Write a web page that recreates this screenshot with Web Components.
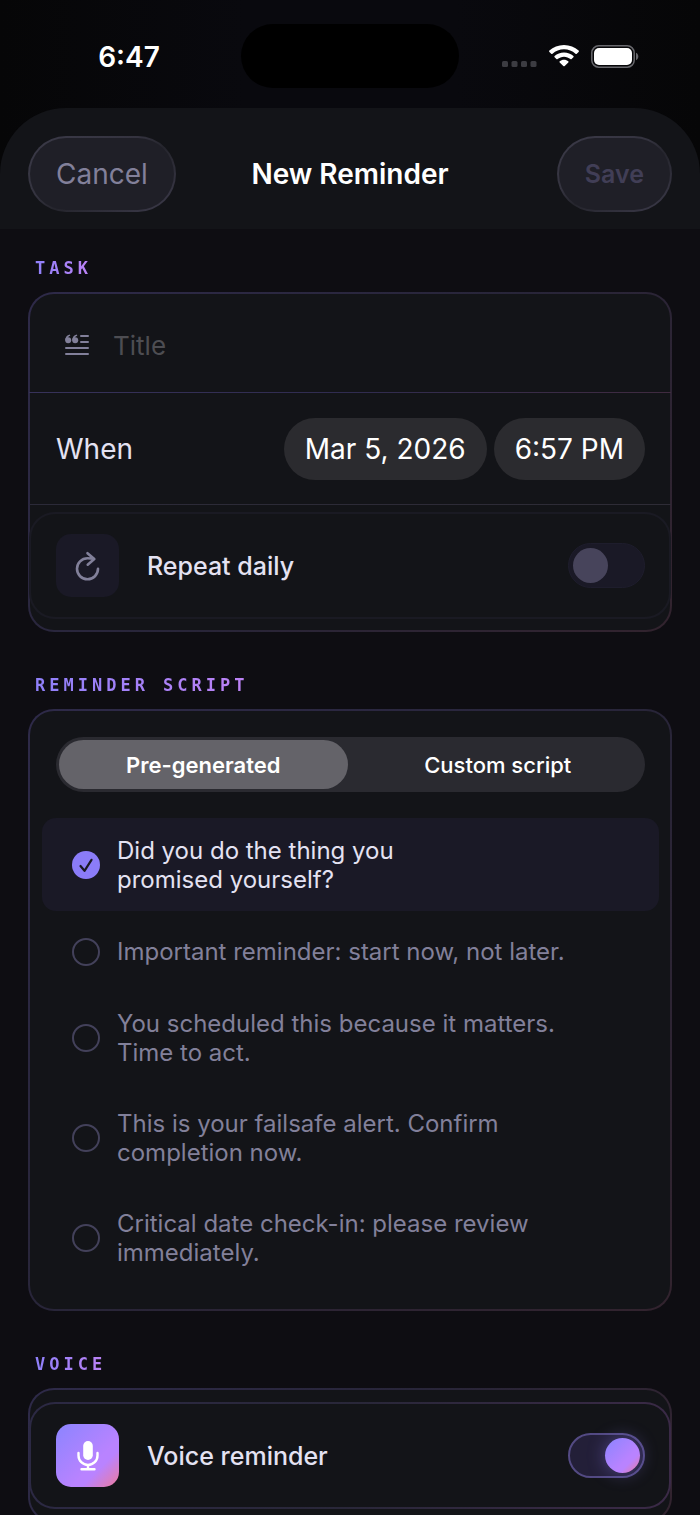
<!DOCTYPE html>
<html lang="en">
<head>
<meta charset="utf-8">
<meta name="viewport" content="width=device-width, initial-scale=1">
<title>New Reminder</title>
<style>
  html { height: 100%; background: #060609; }
  body {
    margin: 0;
    height: 100%;
    font-family: Inter, "Liberation Sans", sans-serif;
    color: #e4e2f2;
    --surface: #131418;
    --ground: #0e0d12;
    --raised: #1a1926;
    --muted: #82809a;
    --violet: #8b7cf8;
    --accent: linear-gradient(135deg, #8b84ff 0%, #b983ff 62%, #b983ff 70%, #ee7a9c 100%);
  }
</style>
</head>
<body>
<reminder-app></reminder-app>

<script>
const define = (name, html, setup) => {
  const template = document.createElement('template');
  template.innerHTML = html;
  customElements.define(name, class extends HTMLElement {
    constructor() {
      super();
      this.attachShadow({ mode: 'open' }).append(template.content.cloneNode(true));
    }
    connectedCallback() { if (setup) setup(this, this.shadowRoot); }
  });
};

/* Clock, camera island and signal / wifi / battery glyphs */
define('status-bar', `
<style>
  :host { display: grid; grid-template-columns: 1fr 218px 1fr; align-items: center; height: 64px; padding: 24px 0 20px; }
  .time { justify-self: center; font-size: 28px; line-height: 34px; font-weight: 600; color: #fff; padding: 2px 0 0 17px; }
  .island { height: 64px; border-radius: 32px; background: #000; }
  .glyphs { display: flex; align-items: center; gap: 12px; justify-self: end; padding-right: 61px; }
  .dots { margin-top: 15px; }
  svg { display: block; }
</style>
<span class="time">6:47</span>
<span class="island"></span>
<span class="glyphs">
  <svg class="dots" width="35" height="6" viewBox="0 0 35 6" fill="#3c3c42"><rect width="6" height="6" rx="1.500"/><rect x="9.500" width="6" height="6" rx="1.500"/><rect x="19" width="6" height="6" rx="1.500"/><rect x="28.500" width="6" height="6" rx="1.500"/></svg>
  <svg width="30" height="22" viewBox="0 0 30 22" fill="#fff"><path d="M15 0C9.300 0 4.200 2.100.400 5.600a.9.900 0 0 0 0 1.300l1.800 1.800c.4.4.9.4 1.300 0C6.600 5.900 10.600 4.300 15 4.300s8.400 1.600 11.500 4.400c.4.4.9.4 1.300 0l1.800-1.800a.9.900 0 0 0 0-1.300C25.800 2.100 20.700 0 15 0z"/><path d="M15 7.400c-3.600 0-6.900 1.300-9.400 3.500a.9.900 0 0 0 0 1.300l1.800 1.800c.4.4.9.4 1.200.1 1.700-1.500 4-2.400 6.400-2.400s4.700.9 6.400 2.400c.3.3.9.3 1.200-.1l1.800-1.800a.9.900 0 0 0 0-1.300c-2.500-2.200-5.800-3.500-9.400-3.500z"/><path d="M15 14.700c-1.700 0-3.200.6-4.300 1.500-.4.4-.4.9 0 1.200l3.600 3.600c.4.4 1 .4 1.400 0l3.600-3.600c.4-.3.4-.8 0-1.200-1.100-.9-2.600-1.500-4.300-1.500z"/></svg>
  <svg width="48" height="23" viewBox="0 0 48 23"><rect x=".8" y=".8" width="42.400" height="21.400" rx="7" fill="none" stroke="#68686d" stroke-width="1.500"/><rect x="3" y="3" width="38" height="17" rx="5" fill="#fff"/><path d="M45 7.800c1.400.6 2.300 2 2.300 3.700s-.9 3.100-2.300 3.700z" fill="#68686d"/></svg>
</span>`);

define('pill-button', `
<style>
  :host { display: block; }
  button {
    display: block; box-sizing: border-box; height: 76px; padding: 0 26px;
    border: 2px solid transparent; border-radius: 38px;
    background: linear-gradient(#1f1f27, #1f1f27) padding-box,
      linear-gradient(150deg, #3b3a48, #34333f 40%, #25252d 55%, #3d3b4b) border-box;
    font: inherit; font-size: 28px; line-height: 34px; color: var(--muted);
  }
  :host([strong]) button { font-size: 25px; font-weight: 600; }
  button:disabled { color: #413e56; }
</style>
<button type="button"><slot></slot></button>`, (host, root) => {
  root.querySelector('button').disabled = host.hasAttribute('disabled');
});

define('sheet-header', `
<style>
  :host { display: grid; grid-template-columns: 1fr auto 1fr; align-items: center; box-sizing: border-box; height: 121px; padding: 10px 28px 0; background: var(--surface); border-radius: 66px 66px 0 0; }
  h1 { margin: 0; font-size: 28px; line-height: 34px; font-weight: 600; color: #fff; white-space: nowrap; }
  ::slotted([slot=start]) { justify-self: start; }
  ::slotted([slot=end]) { justify-self: end; }
</style>
<slot name="start"></slot><h1><slot></slot></h1><slot name="end"></slot>`);

/* Tracked gradient heading above a bordered card */
define('form-section', `
<style>
  :host { display: block; }
  h2 {
    width: fit-content; margin: 0 7px 14px; font-family: "DejaVu Sans Mono", monospace; font-size: 17px; line-height: 20px;
    font-weight: 700; letter-spacing: 4px; color: transparent;
    background: linear-gradient(90deg, #8f80fa, #bd82f5); background-clip: text; -webkit-background-clip: text;
  }
  .card {
    border: 2px solid transparent; border-radius: 26px;
    background: linear-gradient(var(--surface), var(--surface)) padding-box,
      linear-gradient(135deg, #2e2a49, #282539 50%, #32232e) border-box;
  }
</style>
<h2></h2>
<div class="card"><slot></slot></div>`, (host, root) => {
  root.querySelector('h2').textContent = host.getAttribute('heading');
});

define('title-field', `
<style>
  :host { display: flex; align-items: center; gap: 24px; height: 98px; padding: 4px 35px 0; box-sizing: border-box; }
  svg { flex: none; }
  input { flex: 1; min-width: 0; height: 48px; padding: 0; border: 0; outline: 0; background: none; font: inherit; font-size: 26px; color: inherit; }
  input::placeholder { color: #4d4d52; opacity: 1; }
</style>
<svg width="24" height="22" viewBox="0 0 24 22" fill="none" stroke="#82809a" stroke-width="2" stroke-linecap="round"><path d="M16 2h7M16 8h7M1 14h22M1 20h22"/><g fill="#82809a" stroke="none"><circle cx="3.200" cy="6.200" r="3"/><path d="M.2 6.200C.2 3.200 1.800 1.200 4.800.5l.5 1.200C3.500 2.300 2.500 3.500 2.400 5z"/><circle cx="10.200" cy="6.200" r="3"/><path d="M7.200 6.200c0-3 1.600-5 4.600-5.700l.5 1.200C10.500 2.300 9.500 3.500 9.400 5z"/></g></svg>
<input type="text" placeholder="Title" aria-label="Title">`);

define('when-field', `
<style>
  :host { display: flex; align-items: center; gap: 7px; box-sizing: border-box; height: 113px; padding: 0 26px 0 27px; border: solid transparent; border-width: 1px 0;
    background: linear-gradient(90deg, #37325a, #302c50 50%, #402b40) top / 100% 1px no-repeat border-box,
      linear-gradient(90deg, #2b2a38, #2e2c36) bottom / 100% 1px no-repeat border-box; }
  span { flex: 1; font-size: 28px; line-height: 34px; }
  button { height: 62px; padding: 0 21px; border: 0; border-radius: 31px; background: #2b2b2f; color: #fff; font: inherit; font-size: 28px; line-height: 34px; white-space: nowrap; }
</style>
<span id="when">When</span>
<button type="button" aria-describedby="when">Mar 5, 2026</button>
<button type="button" aria-describedby="when">6:57 PM</button>`);

define('toggle-switch', `
<style>
  :host { display: block; }
  input {
    appearance: none; -webkit-appearance: none; display: flex; align-items: center; box-sizing: border-box;
    width: 77px; height: 45px; margin: 0; padding: 0 4px; border: 1px solid #1e1d2c; border-radius: 23px; background: var(--raised);
  }
  input::before { content: ""; width: 35px; height: 35px; border-radius: 50%; background: #47445b; }
  input:checked { justify-content: flex-end; border: 2px solid #534a83; padding: 0 3px; background: #231f38; }
  input:checked::before { background: var(--accent); box-shadow: 0 0 18px #8b7cf866; }
</style>
<input type="checkbox" role="switch">`, (host, root) => {
  const input = root.querySelector('input');
  input.checked = host.hasAttribute('checked');
  input.setAttribute('aria-label', host.getAttribute('label'));
});

/* Inset card: icon tile, caption and switch */
define('toggle-row', `
<style>
  :host { display: flex; align-items: center; box-sizing: border-box; height: 107px; padding: 0 24px 0 25px; border: 2px solid transparent; border-radius: 26px;
    background: linear-gradient(var(--surface), var(--surface)) padding-box, linear-gradient(#1a1a23, #1a1a23) border-box; }
  :host([on]) { background: linear-gradient(var(--surface), var(--surface)) padding-box, linear-gradient(100deg, #2c2944, #292739 50%, #3b2a47) border-box; }
  .tile { display: grid; place-items: center; width: 63px; height: 63px; border-radius: 15px; background: var(--raised); margin-right: 28px; }
  :host([on]) .tile { background: var(--accent); }
  .text { flex: 1; font-size: 25px; line-height: 32px; font-weight: 500; }
</style>
<span class="tile"><slot name="icon"></slot></span>
<span class="text"><slot></slot></span>
<toggle-switch></toggle-switch>`, (host, root) => {
  const toggle = root.querySelector('toggle-switch');
  toggle.setAttribute('label', host.textContent.trim());
  toggle.toggleAttribute('checked', host.hasAttribute('on'));
  const fresh = toggle.cloneNode();
  toggle.replaceWith(fresh);
});

define('segmented-control', `
<style>
  :host { display: grid; grid-template-columns: 1fr 1fr; gap: 6px; box-sizing: border-box; height: 55px; padding: 3px; border-radius: 28px; background: #2a2a30; }
  button { padding: 0; border: 0; border-radius: 25px; background: none; color: #fff; font: inherit; font-size: 22px; line-height: 28px; font-weight: 500; }
  button[aria-selected=true] { background: #646369; font-weight: 600; }
</style>
<button type="button" role="tab" aria-selected="true">Pre-generated</button>
<button type="button" role="tab" aria-selected="false">Custom script</button>`, host => host.setAttribute('role', 'tablist'));

define('script-options', `
<style>
  :host { display: grid; gap: 7px; }
  label { display: flex; align-items: center; gap: 17px; box-sizing: border-box; min-height: 66px; padding: 18px 30px 17px; border-radius: 14px; font-size: 24px; line-height: 29px; color: var(--muted); }
  label:has(:checked) { background: var(--raised); color: #e4e2f2; }
  input { appearance: none; -webkit-appearance: none; flex: none; box-sizing: border-box; width: 28px; height: 28px; margin: 0; border: 2px solid #43415a; border-radius: 50%; }
  input:checked { border: 0; background: var(--violet) url("data:image/svg+xml,%3Csvg xmlns='http://www.w3.org/2000/svg' viewBox='0 0 28 28'%3E%3Cpath d='M8.500 15l4 4.800 7-11' fill='none' stroke='%231a1924' stroke-width='2.200' stroke-linecap='round' stroke-linejoin='round'/%3E%3C/svg%3E") center / 28px no-repeat; }
</style>
<label><input type="radio" name="script" checked><span>Did you do the thing you<br>promised yourself?</span></label>
<label><input type="radio" name="script"><span>Important reminder: start now, not later.</span></label>
<label><input type="radio" name="script"><span>You scheduled this because it matters.<br>Time to act.</span></label>
<label><input type="radio" name="script"><span>This is your failsafe alert. Confirm<br>completion now.</span></label>
<label><input type="radio" name="script"><span>Critical date check-in: please review<br>immediately.</span></label>`);

define('reminder-app', `
<style>
  :host { display: flex; flex-direction: column; height: 100%; min-height: 0; background: linear-gradient(90deg, #060607, #09090e 35%, #09090e 65%, #060607); }
  status-bar, sheet-header { flex: none; }
  main { flex: 1; min-height: 0; overflow-y: auto; scrollbar-width: none; padding: 29px 28px; background: var(--ground); display: flex; flex-direction: column; gap: 43px; }
  form-section { flex: none; }
  when-field, .repeat, .voice { margin: 0 -1px; }
  .repeat { padding: 7px 0 11px; }
  .script { padding: 26px 11px 25px 12px; }
  segmented-control { margin: 0 14px 26px; }
  .voice { padding: 12px 0; }
  svg { display: block; }
</style>
<status-bar></status-bar>
<sheet-header>
  <pill-button slot="start">Cancel</pill-button>
  New Reminder
  <pill-button slot="end" strong disabled>Save</pill-button>
</sheet-header>
<main>
  <form-section heading="TASK">
    <title-field></title-field>
    <when-field></when-field>
    <div class="repeat">
      <toggle-row>
        <svg slot="icon" width="26" height="30" viewBox="0 0 26 30" fill="none" stroke="#82809a" stroke-width="2.600" stroke-linecap="round" stroke-linejoin="round"><path d="M23 17.800A10.500 10.500 0 1 1 12.500 7.300q3.500 0 6.500.8M12.500 2.200l6.800 5.900-6.600 5.600"/></svg>
        Repeat daily
      </toggle-row>
    </div>
  </form-section>
  <form-section heading="REMINDER SCRIPT">
    <div class="script">
      <segmented-control></segmented-control>
      <script-options></script-options>
    </div>
  </form-section>
  <form-section heading="VOICE">
    <div class="voice">
      <toggle-row on>
        <svg slot="icon" width="22" height="30" viewBox="0 0 22 30" fill="none" stroke="#fff" stroke-width="2.400" stroke-linecap="round"><rect x="6.200" y="0" width="9.600" height="19" rx="4.800" fill="#fff" stroke="none"/><path d="M1.500 12v2.500a9.500 9.500 0 0 0 19 0V12M11 24v4M4.500 28.300h13"/></svg>
        Voice reminder
      </toggle-row>
    </div>
  </form-section>
</main>`);
</script>
</body>
</html>
